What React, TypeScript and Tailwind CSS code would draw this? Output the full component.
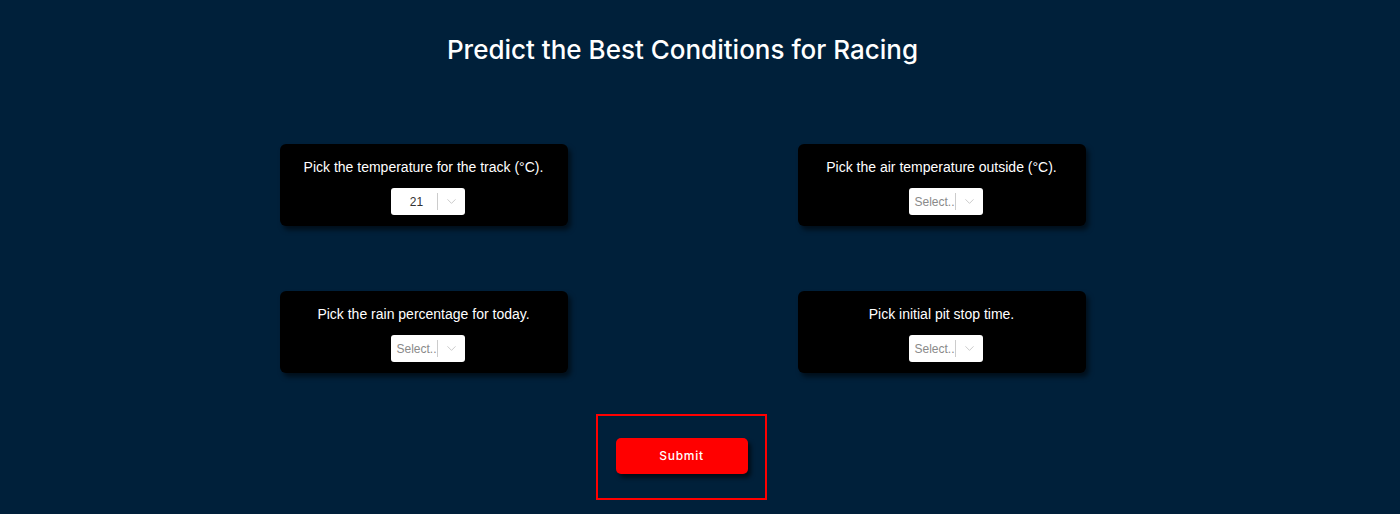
import { ChevronDown } from "lucide-react"

type SelectBoxProps = {
  value?: string
}

const SelectBox = ({ value }: SelectBoxProps) => {
  return (
    <div className="flex h-[27px] w-[74px] items-center rounded-[3px] bg-white">
      <div className="flex flex-1 items-center justify-center overflow-hidden pl-[6px]">
        {value ? (
          <span className="text-[12px] text-[#333333]">{value}</span>
        ) : (
          <span className="whitespace-nowrap text-[12px] text-[#8a8a8a]">Select..</span>
        )}
      </div>
      <div className="h-[17px] w-px bg-[#cccccc]" />
      <div className="flex w-[27px] items-center justify-center">
        <ChevronDown size={15} strokeWidth={1.4} className="text-[#c4c4c4]" />
      </div>
    </div>
  )
}

type CardProps = {
  label: string
  value?: string
}

const QuestionCard = ({ label, value }: CardProps) => {
  return (
    <div className="flex h-[82px] w-[288px] flex-col items-center rounded-md bg-black pt-[15px] shadow-[3px_4px_5px_rgba(0,0,0,0.55)]">
      <p className="text-[14px] leading-[16px] text-white">{label}</p>
      <div className="ml-[8px] mt-[13px]">
        <SelectBox value={value} />
      </div>
    </div>
  )
}

export default function App() {
  return (
    <div className="min-h-[514px] w-full bg-[#00203a]" style={{ fontFamily: '"Liberation Sans", Arial, sans-serif' }}>
      <main className="flex w-[1365px] flex-col items-center pt-[34px]">
        <h1
          className="text-[26px] font-medium leading-[32px] text-white"
          style={{ fontFamily: 'Inter, "Noto Sans", sans-serif' }}
        >
          Predict the Best Conditions for Racing
        </h1>

        <div className="mt-[78px] grid grid-cols-[288px_288px] gap-x-[230px] gap-y-[65px]">
          <QuestionCard label="Pick the temperature for the track (°C)." value="21" />
          <QuestionCard label="Pick the air temperature outside (°C)." />
          <QuestionCard label="Pick the rain percentage for today." />
          <QuestionCard label="Pick initial pit stop time." />
        </div>

        <div className="mr-[2px] mt-[41px] flex h-[86px] w-[171px] items-center justify-center border-2 border-[#ff0000]">
          <button
            type="button"
            className="mb-[3px] h-[36px] w-[132px] rounded-[5px] bg-[#ff0000] text-[12px] font-medium tracking-[0.06em] text-white shadow-[3px_4px_4px_rgba(0,0,0,0.6)]"
            style={{ fontFamily: 'Inter, "Noto Sans", sans-serif' }}
          >
            Submit
          </button>
        </div>
      </main>
    </div>
  )
}
